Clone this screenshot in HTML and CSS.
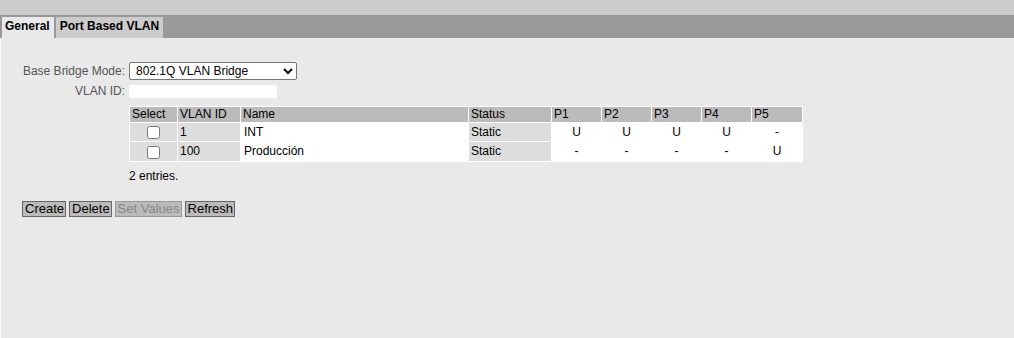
FILE: index.html
```html
<!DOCTYPE html>
<html lang="en">
<head>
  <meta charset="UTF-8" />
  <title>VLAN Configuration</title>
  <link rel="stylesheet" href="styles.css">
</head>
<body>
<div class="topbar"></div>
<div class="tabbar">
  <span class="tab active">General</span>
  <span class="tab">Port Based VLAN</span>
</div>
<div class="content">
  <div class="form-row mode-row">
    <label>Base Bridge Mode:</label>
    <select class="mode">
      <option>802.1Q VLAN Bridge</option>
    </select>
  </div>
  <div class="form-row id-row">
    <label>VLAN ID:</label>
    <input class="vlan-input" type="text">
  </div>
  <div class="table-wrap">
    <table class="vlan-table">
      <colgroup>
        <col class="c-sel"><col class="c-id"><col class="c-name"><col class="c-status">
        <col class="c-port"><col class="c-port"><col class="c-port"><col class="c-port"><col class="c-last">
      </colgroup>
      <thead>
        <tr>
          <th>Select</th>
          <th>VLAN ID</th>
          <th>Name</th>
          <th>Status</th>
          <th>P1</th>
          <th>P2</th>
          <th>P3</th>
          <th>P4</th>
          <th>P5</th>
        </tr>
      </thead>
      <tbody>
        <tr>
          <td class="gray center"><input type="checkbox"></td>
          <td class="gray">1</td>
          <td class="name">INT</td>
          <td class="gray">Static</td>
          <td class="port">U</td>
          <td class="port">U</td>
          <td class="port">U</td>
          <td class="port">U</td>
          <td class="port">-</td>
        </tr>
        <tr>
          <td class="gray center"><input type="checkbox"></td>
          <td class="gray">100</td>
          <td class="name">Producción</td>
          <td class="gray">Static</td>
          <td class="port">-</td>
          <td class="port">-</td>
          <td class="port">-</td>
          <td class="port">-</td>
          <td class="port">U</td>
        </tr>
      </tbody>
    </table>
    <p class="entries">2 entries.</p>
  </div>
  <div class="buttons">
    <button>Create</button>
    <button>Delete</button>
    <button disabled>Set Values</button>
    <button>Refresh</button>
  </div>
</div>
</body>
</html>
```

FILE: styles.css
```css
html, body {
  margin: 0;
  height: 100%;
}
body {
  font-family: 'Liberation Sans', Arial, sans-serif;
  font-size: 12px;
  color: #000;
  background: #e9e9e9;
  display: flex;
  flex-direction: column;
}
.topbar {
  height: 15px;
  background: #cccccc;
}
.tabbar {
  height: 21px;
  padding-top: 2px;
  background: #999999;
  display: flex;
  align-items: stretch;
}
.tab {
  font-weight: bold;
  padding: 2px 4px 0 4px;
  background: #cccccc;
  line-height: 14px;
}
.tab.active {
  margin-left: 2px;
  padding-left: 3px;
  background: #e9e9e9;
  border-right: 2px solid #999999;
}
.content {
  flex: 1;
  background: #e9e9e9;
  border-left: 1px solid #fafafa;
  padding: 24px 0 0 21px;
}
.form-row {
  display: flex;
  align-items: center;
}
.form-row label {
  width: 107px;
  flex: none;
  white-space: nowrap;
  text-align: right;
  color: #555;
  padding-right: 4px;
  box-sizing: border-box;
}
.mode-row {
  height: 18px;
  margin-bottom: 5px;
}
.id-row {
  height: 13px;
  line-height: 13px;
}
.mode {
  font-family: inherit;
  font-size: 12px;
  width: 168px;
  height: 18px;
  padding: 0 2px;
  border: 1px solid #767676;
  border-radius: 2px;
  background: #fff;
  color: #000;
}
.vlan-input {
  width: 148px;
  height: 13px;
  padding: 0;
  border: none;
  background: #fff;
}
.table-wrap {
  margin-left: 107px;
  margin-top: 8px;
}
.vlan-table {
  table-layout: fixed;
  width: 674px;
  border-collapse: separate;
  border-spacing: 1px;
  background: #fff;
  font-size: 12px;
}
.vlan-table th {
  background: #bbbbbb;
  font-weight: normal;
  text-align: left;
  padding: 1px 2px;
  line-height: 13px;
}
.vlan-table td {
  padding: 2px 2px;
  line-height: 14px;
}
.c-sel { width: 47px; }
.c-id { width: 62px; }
.c-name { width: 227px; }
.c-status { width: 82px; }
.c-port { width: 49px; }
.c-last { width: 50px; }
.gray {
  background: #dddddd;
}
.center {
  text-align: center;
}
.gray.center input {
  margin: 0;
  width: 13px;
  height: 13px;
  vertical-align: middle;
}
.name {
  background: #fff;
}
.vlan-table td.name {
  padding-left: 3px;
}
.port {
  background: #fff;
  text-align: center;
}
.entries {
  margin: 7px 0 0 0;
}
.buttons {
  margin-top: 18px;
  display: flex;
  gap: 3px;
}
.buttons button {
  font-family: inherit;
  font-size: 13px;
  background: #bbbbbb;
  border: 1px solid #666;
  padding: 0 1px 0 2px;
  height: 16px;
  line-height: 14px;
  color: #000;
  border-radius: 0;
}
.buttons button:disabled {
  color: #888;
  border-color: #999;
}
```
